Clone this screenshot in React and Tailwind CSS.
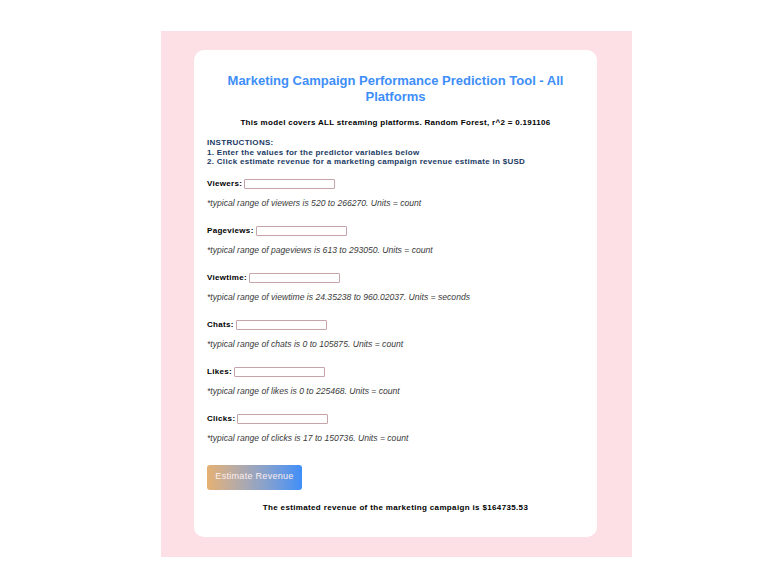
import React, { useState } from "react"

const FIELDS = [
  { name: "Viewers", hint: "*typical range of viewers is 520 to 266270. Units = count" },
  { name: "Pageviews", hint: "*typical range of pageviews is 613 to 293050. Units = count" },
  { name: "Viewtime", hint: "*typical range of viewtime is 24.35238 to 960.02037. Units = seconds" },
  { name: "Chats", hint: "*typical range of chats is 0 to 105875. Units = count" },
  { name: "Likes", hint: "*typical range of likes is 0 to 225468. Units = count" },
  { name: "Clicks", hint: "*typical range of clicks is 17 to 150736. Units = count" },
]

export default function App() {
  const [values, setValues] = useState({})

  return (
    <div className="min-h-[580px] w-[775px] bg-white pt-[31px] font-['Liberation_Sans',Arial,sans-serif]">
      <div className="ml-[161px] w-[471px] bg-[#fde0e6] pb-[20px] pl-[33px] pr-[35px] pt-[19px]">
        <div className="h-[487px] rounded-[10px] bg-white px-[13px] pt-[23px]">
          {/* titel */}
          <h1 className="mx-auto w-[350px] text-center text-[13px] font-bold leading-[16px] text-[#3d8ef8]">
            Marketing Campaign Performance Prediction Tool - All Platforms
          </h1>
          <p className="mt-[13px] text-center text-[8px] font-bold leading-[10px] tracking-[0.3px] text-black">
            This model covers ALL streaming platforms. Random Forest, r^2 = 0.191106
          </p>

          {/* instructies */}
          <div className="mt-[10px] text-[8px] font-bold leading-[9.5px] tracking-[0.3px] text-[#1b3a63]">
            <div>INSTRUCTIONS:</div>
            <div>1. Enter the values for the predictor variables below</div>
            <div>2. Click estimate revenue for a marketing campaign revenue estimate in $USD</div>
          </div>

          <div className="mt-[11px] flex flex-col">
            {FIELDS.map((f) => (
              <div key={f.name} className="h-[47px]">
                <div className="flex h-[12px] items-center gap-[2px]">
                  <span className="text-[8px] font-bold tracking-[0.3px] text-black">{f.name}:</span>
                  <input
                    className="h-[10px] w-[91px] rounded-[1px] border border-[#c7a3aa] bg-white text-[8px] outline-none"
                    value={values[f.name] || ""}
                    onChange={(e) => setValues({ ...values, [f.name]: e.target.value })}
                  />
                </div>
                <p className="mt-[8px] text-[8.6px] italic leading-[10px] text-[#3a3a3a]">{f.hint}</p>
              </div>
            ))}
          </div>

          <button className="mt-[5px] h-[25px] w-[95px] rounded-[3px] bg-gradient-to-r from-[#e5b072] to-[#3e8ef8] text-[9px] tracking-[0.3px] text-[#fbeeee]">
            Estimate Revenue
          </button>
          <p className="mt-[12px] text-center text-[8px] font-bold tracking-[0.35px] text-black">
            The estimated revenue of the marketing campaign is $164735.53
          </p>
        </div>
      </div>
    </div>
  )
}
